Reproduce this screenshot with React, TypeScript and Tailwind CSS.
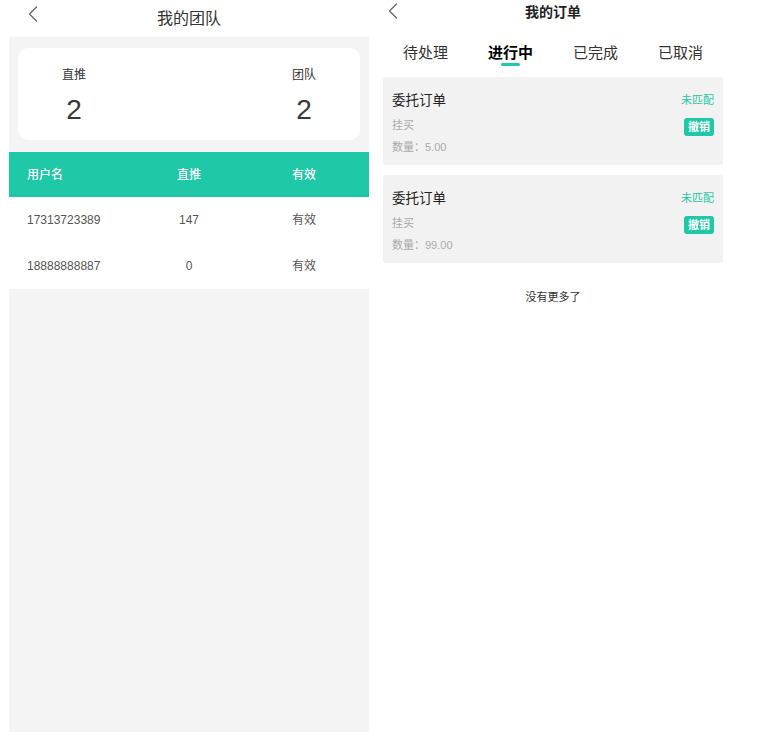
import { useState } from 'react';

const font = { fontFamily: '"Liberation Sans", "Noto Sans CJK SC", sans-serif' };

const Chevron = () => (
  <svg width="10" height="16" viewBox="0 0 10 16" fill="none">
    <path d="M8.5 1L1.5 8l7 7" stroke="#666" strokeWidth="1.3" strokeLinecap="round" strokeLinejoin="round" />
  </svg>
);

const members = [
  { name: '17313723389', direct: '147', status: '有效' },
  { name: '18888888887', direct: '0', status: '有效' },
];

const orders = [
  { type: '挂买', amount: '5.00' },
  { type: '挂买', amount: '99.00' },
];

const tabs = ['待处理', '进行中', '已完成', '已取消'];

const TeamPanel = () => (
  <div className="w-[378px] h-full flex flex-col">
    {/* Header */}
    <div className="h-[37px] relative flex items-center justify-center">
      <span className="absolute left-[28px] top-[6px]"><Chevron /></span>
      <span className="text-[16px] text-[#333]">我的团队</span>
    </div>

    <div className="mx-[9px] flex-1 bg-[#f4f4f4] pt-[11px]">
      {/* Summary card */}
      <div className="mx-[9px] h-[92px] rounded-[10px] bg-white flex items-center justify-between px-[44px]">
        <div className="flex flex-col items-center pt-[4px]">
          <span className="text-[12px] text-[#333] leading-none">直推</span>
          <span className="text-[28px] text-[#383838] leading-none mt-[15px]">2</span>
        </div>
        <div className="flex flex-col items-center pt-[4px]">
          <span className="text-[12px] text-[#333] leading-none">团队</span>
          <span className="text-[28px] text-[#383838] leading-none mt-[15px]">2</span>
        </div>
      </div>

      {/* Table */}
      <div className="mt-[12px]">
        <div className="h-[45px] bg-[#1fc8a6] grid grid-cols-[130px_100px_130px] items-center text-[12px] text-white font-medium">
          <span className="pl-[18px]">用户名</span>
          <span className="text-center">直推</span>
          <span className="text-center">有效</span>
        </div>
        {members.map((m) => (
          <div key={m.name} className="h-[46px] bg-white grid grid-cols-[130px_100px_130px] items-center text-[12px] text-[#555]">
            <span className="pl-[18px]">{m.name}</span>
            <span className="text-center">{m.direct}</span>
            <span className="text-center">{m.status}</span>
          </div>
        ))}
      </div>
    </div>
  </div>
);

const OrderPanel = () => {
  const [active, setActive] = useState(1);

  return (
    <div className="w-[350px] h-full flex flex-col">
      {/* Header */}
      <div className="h-[24px] relative flex items-center justify-center">
        <span className="absolute left-[10px] top-[3px]"><Chevron /></span>
        <span className="text-[14px] font-bold text-[#222]">我的订单</span>
      </div>

      {/* Tabs */}
      <div className="mx-[5px] grid grid-cols-4 h-[46px]">
        {tabs.map((t, i) => (
          <button key={t} onClick={() => setActive(i)} className="flex flex-col items-center pt-[21px]">
            <span className={i === active ? 'text-[15px] leading-none font-bold text-black' : 'text-[15px] leading-none text-[#333]'}>{t}</span>
            {i === active && <span className="mt-[3px] w-[19px] h-[3px] rounded-full bg-[#1fc8a6]" />}
          </button>
        ))}
      </div>

      {/* Orders */}
      <div className="mx-[5px] mt-[7px] flex flex-col gap-[10px]">
        {orders.map((o, i) => (
          <div key={i} className="h-[88px] bg-[#f2f2f2] rounded-[3px] px-[9px] pt-[17px] flex justify-between">
            <div className="flex flex-col">
              <span className="text-[13.5px] leading-none text-[#222]">委托订单</span>
              <span className="text-[11px] leading-none text-[#aaa] mt-[12px]">{o.type}</span>
              <span className="text-[11px] leading-none text-[#aaa] mt-[11px]">数量：{o.amount}</span>
            </div>
            <div className="flex flex-col items-end pt-[1px]">
              <span className="text-[11px] leading-none text-[#1fc8a6]">未匹配</span>
              <span className="mt-[12px] h-[18px] w-[30px] rounded-[3px] bg-[#1fc8a6] text-white text-[11px] font-bold flex items-center justify-center">撤销</span>
            </div>
          </div>
        ))}
      </div>

      <div className="mt-[26px] text-center text-[11px] text-[#333]">没有更多了</div>
    </div>
  );
};

export default function App() {
  return (
    <div className="w-[767px] h-[732px] bg-white flex" style={font}>
      <TeamPanel />
      <OrderPanel />
    </div>
  );
}
